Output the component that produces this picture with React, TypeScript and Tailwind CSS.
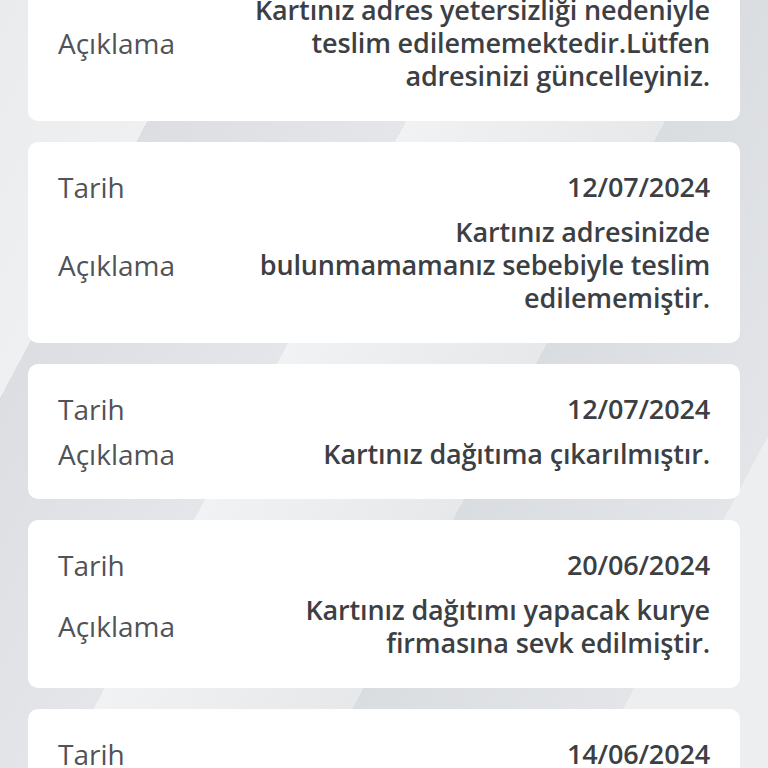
import React from 'react';

interface Entry {
  date: string;
  text: string;
}

// Delivery history rows, newest first
const ENTRIES: Entry[] = [
  { date: '12/07/2024', text: 'Kartınız adres yetersizliği nedeniyle teslim edilememektedir.Lütfen adresinizi güncelleyiniz.' },
  { date: '12/07/2024', text: 'Kartınız adresinizde bulunmamamanız sebebiyle teslim edilememiştir.' },
  { date: '12/07/2024', text: 'Kartınız dağıtıma çıkarılmıştır.' },
  { date: '20/06/2024', text: 'Kartınız dağıtımı yapacak kurye firmasına sevk edilmiştir.' },
  { date: '14/06/2024', text: 'Kartınız basılmıştır.' },
];

function EntryCard({ entry }: { entry: Entry }) {
  return (
    <div className="bg-white rounded-[10px] px-[30px] py-[29px] flex flex-col gap-3">
      <div className="flex items-center justify-between leading-[32px]">
        <span className="text-[28px] text-[#505358] font-normal">Tarih</span>
        <span className="text-[27px] text-[#3c3f44] font-semibold tracking-[-0.15px]">{entry.date}</span>
      </div>
      <div className="flex items-center justify-between gap-6">
        <span className="text-[28px] text-[#505358] font-normal leading-[32px] shrink-0">Açıklama</span>
        <p className="text-[27px] text-[#3c3f44] font-semibold tracking-[-0.15px] text-right leading-[33px] max-w-[478px]">
          {entry.text}
        </p>
      </div>
    </div>
  );
}

export default function App() {
  return (
    <div
      className="w-[768px] h-[768px] overflow-hidden bg-[#e1e3e6] bg-[linear-gradient(118deg,#e9ebed_0%,#eef0f2_18%,#dcdee1_18%,#e4e6e9_40%,#f1f2f4_40%,#e6e8ea_62%,#dadde0_62%,#e3e5e8_85%,#eceef0_85%)]"
      style={{ fontFamily: '"Open Sans", "Noto Sans", sans-serif' }}
    >
      <div className="-mt-[80px] px-[28px] flex flex-col gap-[21px]">
        {ENTRIES.map((e, i) => (
          <EntryCard key={i} entry={e} />
        ))}
      </div>
    </div>
  );
}
